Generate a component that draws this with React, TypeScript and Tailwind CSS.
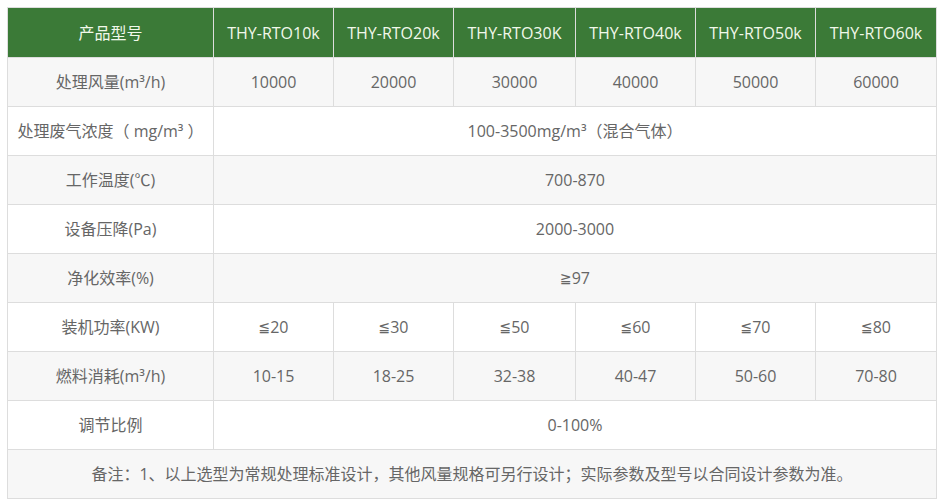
const MODELS = ['THY-RTO10k', 'THY-RTO20k', 'THY-RTO30K', 'THY-RTO40k', 'THY-RTO50k', 'THY-RTO60k']

type Row = { label: string; values: string[] }

const ROWS: Row[] = [
  { label: '处理风量(m³/h)', values: ['10000', '20000', '30000', '40000', '50000', '60000'] },
  { label: '处理废气浓度（ mg/m³ ）', values: ['100-3500mg/m³（混合气体）'] },
  { label: '工作温度(℃)', values: ['700-870'] },
  { label: '设备压降(Pa)', values: ['2000-3000'] },
  { label: '净化效率(%)', values: ['≧97'] },
  { label: '装机功率(KW)', values: ['≦20', '≦30', '≦50', '≦60', '≦70', '≦80'] },
  { label: '燃料消耗(m³/h)', values: ['10-15', '18-25', '32-38', '40-47', '50-60', '70-80'] },
  { label: '调节比例', values: ['0-100%'] },
]

// the ≦ / ≧ signs are narrow in the original, so give them a latin font
function Value({ text }: { text: string }) {
  const sign = text[0]
  if (sign === '≦' || sign === '≧') {
    return (
      <>
        <span className="font-['DejaVu_Sans',sans-serif] text-[14px]">{sign}</span>
        {text.slice(1)}
      </>
    )
  }
  return <>{text}</>
}

export default function App() {
  return (
    <div className="min-h-[501px] bg-white pl-[7px] pt-[7px] font-['Open_Sans','Noto_Sans_CJK_SC',sans-serif] text-[16px] text-[#666]">
      <div className="grid w-[930px] grid-cols-[205px_119px_119px_121px_119px_119px_120px] gap-px border border-[#ddd] bg-[#ddd]">
        <div className="flex h-[49px] items-center justify-center bg-[#3b7a37] text-[#f1f8ea]">产品型号</div>
        {MODELS.map((m) => (
          <div key={m} className="flex h-[49px] items-center justify-center bg-[#3b7a37] text-[#f1f8ea]">
            {m}
          </div>
        ))}
        {ROWS.map((row, i) => {
          const bg = i % 2 === 0 ? 'bg-[#f7f7f7]' : 'bg-white'
          return [
            <div key={row.label} className={`flex h-[48px] items-center justify-center ${bg}`}>
              {row.label}
            </div>,
            row.values.length === 1 ? (
              <div key={row.label + '-v'} className={`col-span-6 flex h-[48px] items-center justify-center ${bg}`}>
                <Value text={row.values[0]} />
              </div>
            ) : (
              row.values.map((v, j) => (
                <div key={row.label + j} className={`flex h-[48px] items-center justify-center ${bg}`}>
                  <Value text={v} />
                </div>
              ))
            ),
          ]
        })}
        <div className="col-span-7 flex h-[48px] items-center justify-center bg-[#f7f7f7]">
          备注：1、以上选型为常规处理标准设计，其他风量规格可另行设计；实际参数及型号以合同设计参数为准。
        </div>
      </div>
    </div>
  )
}
